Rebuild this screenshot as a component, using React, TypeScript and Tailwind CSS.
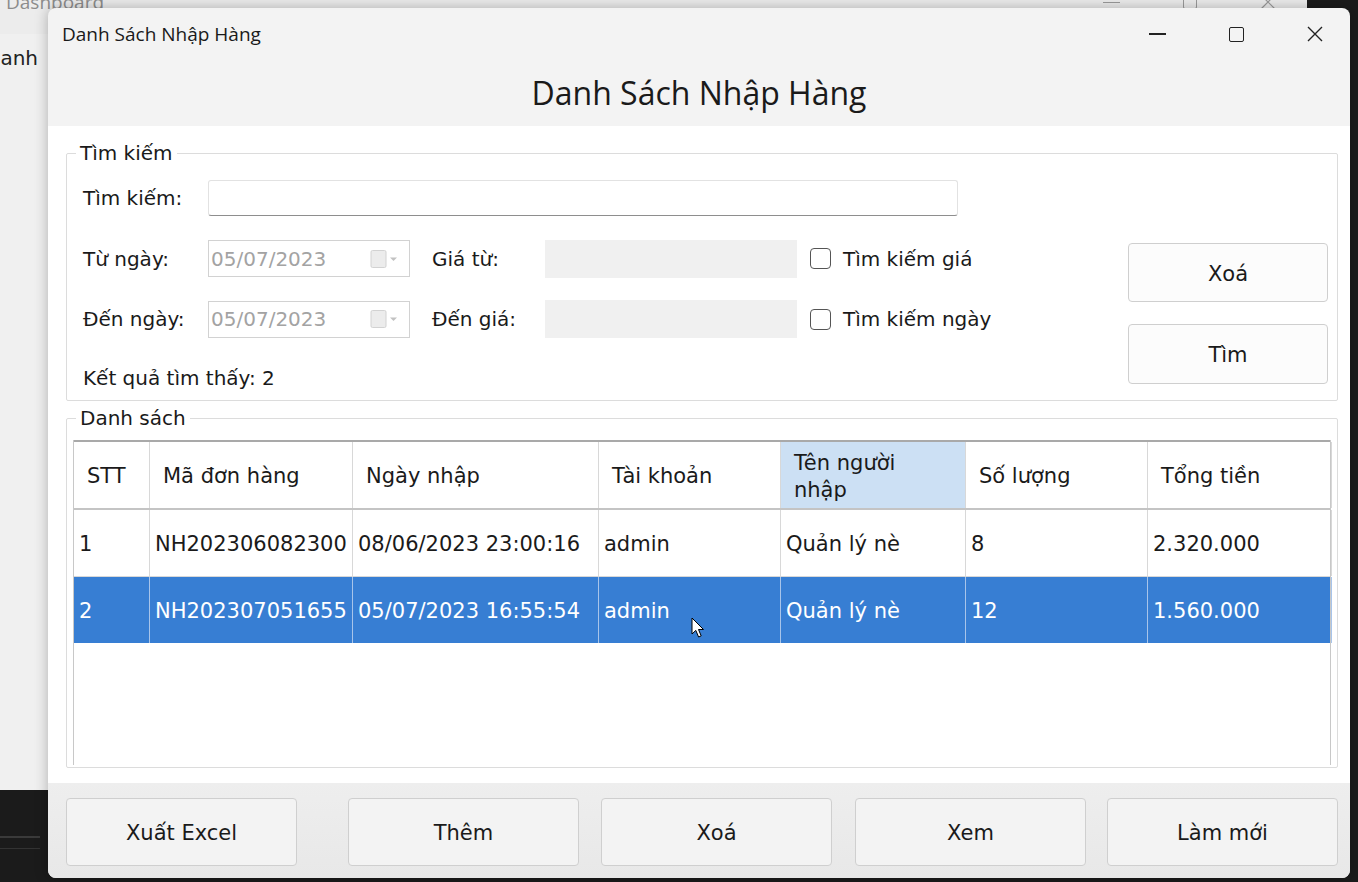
import React from 'react';

const rows = [
  ['1', 'NH202306082300', '08/06/2023 23:00:16', 'admin', 'Quản lý nè', '8', '2.320.000'],
  ['2', 'NH202307051655', '05/07/2023 16:55:54', 'admin', 'Quản lý nè', '12', '1.560.000'],
];

const cols = 'grid grid-cols-[76px_203px_246px_182px_185px_182px_184px]';

const DatePicker = () => (
  <div className="flex h-[37px] w-[202px] items-center border border-[#d2d2d2] bg-white pl-[2px] pr-[10px]">
    <span className="flex-1 text-[20px] text-[#a3a3a3]">05/07/2023</span>
    <svg width="30" height="20" viewBox="0 0 30 20">
      <rect x="2" y="1.5" width="15" height="17" rx="1.5" fill="#ececec" stroke="#d2d2d2" />
      <path d="M21 8.5 L28 8.5 L24.5 12 Z" fill="#c2c2c2" />
    </svg>
  </div>
);

const CheckBox = ({ label }: { label: string }) => (
  <div className="ml-[13px] flex items-center">
    <div className="h-[21px] w-[21px] rounded-[4px] border-[1.5px] border-[#555] bg-white" />
    <span className="ml-[12px] text-[20px]">{label}</span>
  </div>
);

const Button = ({ label, className }: { label: string; className?: string }) => (
  <button className={`flex items-center justify-center rounded-[4px] border border-[#cfcfcf] pt-[4px] text-[21px] text-[#1a1a1a] ${className ?? ''}`}>
    {label}
  </button>
);

const App = () => (
  <div className="relative h-[882px] w-[1358px] overflow-hidden bg-[#1b1b1b] font-['DejaVu_Sans',sans-serif] text-[#1a1a1a]">
    {/* window behind */}
    <div className="absolute left-0 top-[-30px] h-[820px] w-[1307px] bg-[#f0f0f0]">
      <div className="flex h-[64px] items-center bg-[#ececec] pl-[6px] font-['Open_Sans',sans-serif] text-[19px] text-[#8c8c8c]">
        <span>Dashboard</span>
        <div className="ml-auto mr-[31px] flex items-center gap-[63px]">
          <div className="h-[1px] w-[17px] bg-[#9a9a9a]" />
          <div className="h-[14px] w-[14px] rounded-[2px] border border-[#9a9a9a]" />
          <svg width="16" height="16" viewBox="0 0 16 16">
            <path d="M1 1 L15 15 M15 1 L1 15" stroke="#9a9a9a" strokeWidth="1.2" />
          </svg>
        </div>
      </div>
      <div className="ml-[-15px] mt-[9px] text-[20px] text-[#222]">Danh</div>
    </div>
    <div className="absolute left-0 top-[836px] h-[2px] w-[40px] bg-[#3a3a3a]" />
    <div className="absolute left-0 top-[848px] h-[1px] w-[40px] bg-[#333]" />

    {/* main window */}
    <div className="absolute left-[48px] top-[8px] flex h-[870px] w-[1302px] flex-col overflow-hidden rounded-[8px] bg-[#f3f3f3] shadow-[0_0_14px_rgba(0,0,0,0.28)]">
      <div className="flex h-[52px] shrink-0 items-center pl-[14px] font-['Open_Sans',sans-serif] text-[19px]">
        <span>Danh Sách Nhập Hàng</span>
        <div className="ml-auto mr-[27px] flex items-center gap-[63px]">
          <div className="h-[1.5px] w-[17px] bg-[#222]" />
          <div className="h-[15px] w-[15px] rounded-[2px] border-[1.5px] border-[#222]" />
          <svg width="16" height="16" viewBox="0 0 16 16">
            <path d="M1 1 L15 15 M15 1 L1 15" stroke="#222" strokeWidth="1.4" />
          </svg>
        </div>
      </div>

      <div className="flex h-[66px] shrink-0 items-center justify-center font-['Open_Sans',sans-serif] text-[32px]">
        Danh Sách Nhập Hàng
      </div>

      <div className="h-[657px] shrink-0 bg-white pl-[18px] pr-[12px] pt-[15px]">
        <fieldset className="h-[260px] rounded-[2px] border border-[#dcdcdc]">
          <legend className="ml-[9px] px-[4px] text-[20px] leading-[24px]">Tìm kiếm</legend>
          <div className="flex pl-[16px] pt-[15px]">
            <div className="flex flex-col text-[20px]">
              <div className="flex h-[36px] items-center">
                <span className="w-[125px]">Tìm kiếm:</span>
                <div className="h-[36px] w-[750px] rounded-[3px] border border-[#e2e2e2] border-b-[#8e8e8e] bg-white" />
              </div>
              <div className="mt-[24px] flex h-[37px] items-center">
                <span className="w-[125px]">Từ ngày:</span>
                <DatePicker />
                <span className="ml-[22px] w-[113px]">Giá từ:</span>
                <div className="h-[38px] w-[252px] bg-[#f0f0f0]" />
                <CheckBox label="Tìm kiếm giá" />
              </div>
              <div className="mt-[23px] flex h-[38px] items-center">
                <span className="w-[125px]">Đến ngày:</span>
                <DatePicker />
                <span className="ml-[22px] w-[113px]">Đến giá:</span>
                <div className="h-[38px] w-[252px] bg-[#f0f0f0]" />
                <CheckBox label="Tìm kiếm ngày" />
              </div>
              <div className="mt-[28px] leading-[24px]">Kết quả tìm thấy: 2</div>
            </div>
            <div className="ml-auto mr-[9px] mt-[63px] flex flex-col">
              <Button label="Xoá" className="h-[59px] w-[200px] bg-[#fcfcfc]" />
              <Button label="Tìm" className="mt-[22px] h-[60px] w-[200px] bg-[#fcfcfc]" />
            </div>
          </div>
        </fieldset>

        <fieldset className="mt-[5px] h-[362px] rounded-[2px] border border-[#dcdcdc]">
          <legend className="ml-[9px] px-[4px] text-[20px] leading-[24px]">Danh sách</legend>
          <div className="px-[6px] pt-[10px]">
            <div className="relative h-[325px] w-[1258px] border-x border-[#c8c8c8] bg-white text-[21px]">
              <div className={`${cols} h-[70px] border-t-2 border-b-2 border-t-[#a9a9a9] border-b-[#c4c4c4]`}>
                {['STT', 'Mã đơn hàng', 'Ngày nhập', 'Tài khoản', 'Tên người|nhập', 'Số lượng', 'Tổng tiền'].map((h, i) => (
                  <div
                    key={h}
                    className={`flex items-center border-r border-[#d8d8d8] pl-[13px] pt-[3px] leading-[27px] ${i === 4 ? 'bg-[#cce0f4]' : ''}`}
                  >
                    <span>
                      {h.split('|').map((p, j) => (
                        <React.Fragment key={p}>
                          {j > 0 && <br />}
                          {p}
                        </React.Fragment>
                      ))}
                    </span>
                  </div>
                ))}
              </div>
              {rows.map((r, ri) => (
                <div
                  key={r[0]}
                  className={`${cols} ${ri === 0 ? 'h-[67px] border-b border-[#d8d8d8]' : 'h-[66px] bg-[#377ed3] text-white'}`}
                >
                  {r.map((c, ci) => (
                    <div
                      key={ci}
                      className={`flex items-center overflow-hidden whitespace-nowrap border-r pl-[5px] pt-[4px] ${ri === 0 ? 'border-[#d8d8d8]' : 'border-[#a7c4ea]'}`}
                    >
                      {c}
                    </div>
                  ))}
                </div>
              ))}
              {/* mouse pointer */}
              <svg className="absolute left-[617px] top-[177px]" width="14" height="22" viewBox="0 0 14 22">
                <path d="M1 1 L1 17 L4.8 13.4 L7.6 20 L10.2 18.9 L7.5 12.5 L12.5 12.5 Z" fill="#fff" stroke="#000" strokeWidth="1" strokeLinejoin="round" />
              </svg>
            </div>
          </div>
        </fieldset>
      </div>

      <div className="flex h-[95px] shrink-0 bg-gradient-to-b from-[#eeeeee] to-[#e8e8e8] pl-[18px] pt-[15px]">
        <Button label="Xuất Excel" className="h-[68px] w-[231px] bg-[#f3f3f3]" />
        <Button label="Thêm" className="ml-[51px] h-[68px] w-[231px] bg-[#f3f3f3]" />
        <Button label="Xoá" className="ml-[22px] h-[68px] w-[231px] bg-[#f3f3f3]" />
        <Button label="Xem" className="ml-[23px] h-[68px] w-[231px] bg-[#f3f3f3]" />
        <Button label="Làm mới" className="ml-[21px] h-[68px] w-[231px] bg-[#f3f3f3]" />
      </div>
    </div>
  </div>
);

export default App;
